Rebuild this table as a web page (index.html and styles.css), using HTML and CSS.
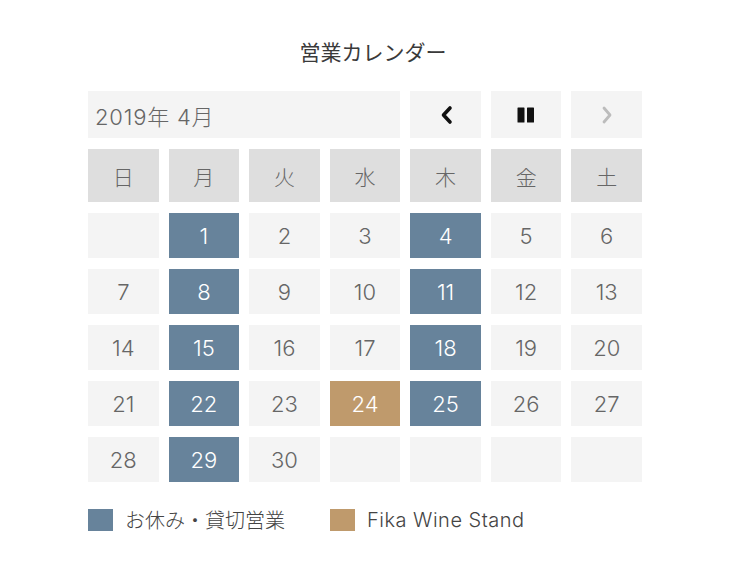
FILE: index.html
```html
<!DOCTYPE html>
<html lang="ja">
<head>
<meta charset="utf-8">
<link rel="stylesheet" href="styles.css">
</head>
<body>
<div class="page">
  <h1 class="title">営業カレンダー</h1>
  <div class="cal">
    <div class="month">2019年 4月</div>
    <div class="btn">
      <svg width="16" height="20" viewBox="0 0 16 20"><path d="M12 3 L5.5 10 L12 17" fill="none" stroke="#111" stroke-width="3.6" stroke-linecap="round" stroke-linejoin="round"/></svg>
    </div>
    <div class="btn">
      <svg width="20" height="16" viewBox="0 0 20 16"><rect x="1.5" y="0.5" width="7" height="15" rx="0.6" fill="#111"/><rect x="11" y="0.5" width="7" height="15" rx="0.6" fill="#111"/></svg>
    </div>
    <div class="btn">
      <svg width="16" height="20" viewBox="0 0 16 20"><path d="M5 3 L11 10 L5 17" fill="none" stroke="#bcbcbc" stroke-width="2.8" stroke-linecap="round" stroke-linejoin="round"/></svg>
    </div>

    <div class="dow">日</div><div class="dow">月</div><div class="dow">火</div><div class="dow">水</div><div class="dow">木</div><div class="dow">金</div><div class="dow">土</div>

    <div class="d"></div><div class="d off">1</div><div class="d">2</div><div class="d">3</div><div class="d off">4</div><div class="d">5</div><div class="d">6</div>
    <div class="d">7</div><div class="d off">8</div><div class="d">9</div><div class="d">10</div><div class="d off">11</div><div class="d">12</div><div class="d">13</div>
    <div class="d">14</div><div class="d off">15</div><div class="d">16</div><div class="d">17</div><div class="d off">18</div><div class="d">19</div><div class="d">20</div>
    <div class="d">21</div><div class="d off">22</div><div class="d">23</div><div class="d fika">24</div><div class="d off">25</div><div class="d">26</div><div class="d">27</div>
    <div class="d">28</div><div class="d off">29</div><div class="d">30</div><div class="d"></div><div class="d"></div><div class="d"></div><div class="d"></div>
  </div>
  <div class="legend">
    <div class="item"><span class="sw sw-off"></span><span>お休み・貸切営業</span></div>
    <div class="item"><span class="sw sw-fika"></span><span class="latin">Fika Wine Stand</span></div>
  </div>
</div>
</body>
</html>
```

FILE: styles.css
```css
html, body {
  margin: 0;
  padding: 0;
  background: #fff;
}
body {
  font-family: Inter, "Noto Sans CJK JP", sans-serif;
  color: #666;
}
.page {
  width: 750px;
  height: 569px;
  padding: 0 0 0 88px;
  box-sizing: border-box;
}
.title {
  margin: 0;
  padding-top: 38px;
  height: 91px;
  box-sizing: border-box;
  width: 570px;
  text-align: center;
  font-size: 21px;
  font-weight: 400;
  color: #3a3a3a;
  line-height: 30px;
}
.cal {
  width: 554px;
  display: grid;
  grid-template-columns: repeat(7, 1fr);
  grid-template-rows: 47px 53px repeat(5, 45px);
  column-gap: 10px;
  row-gap: 11px;
}
.cal > div {
  display: flex;
  align-items: center;
  justify-content: center;
  font-size: 22px;
  font-weight: 300;
}
.month {
  grid-column: span 4;
  background: #f4f4f4;
  justify-content: flex-start !important;
  padding-left: 7px;
  color: #666;
  letter-spacing: 0.8px;
}
.btn {
  background: #f4f4f4;
}
.dow {
  background: #dedede;
  color: #666;
  font-size: 21px !important;
}
.d {
  background: #f4f4f4;
  color: #666;
}
.d.off {
  background: #67839b;
  color: #fff;
}
.d.fika {
  background: #bf9a6c;
  color: #fff;
}
.legend {
  display: flex;
  margin-top: 23px;
}
.item {
  display: flex;
  align-items: center;
  font-size: 20px;
  font-weight: 300;
  color: #444;
}
.item:first-child {
  width: 242px;
}
.latin {
  letter-spacing: 0.5px;
}
.sw {
  width: 25px;
  height: 22px;
  margin-right: 12px;
}
.sw-off { background: #67839b; }
.sw-fika { background: #bf9a6c; }
```
